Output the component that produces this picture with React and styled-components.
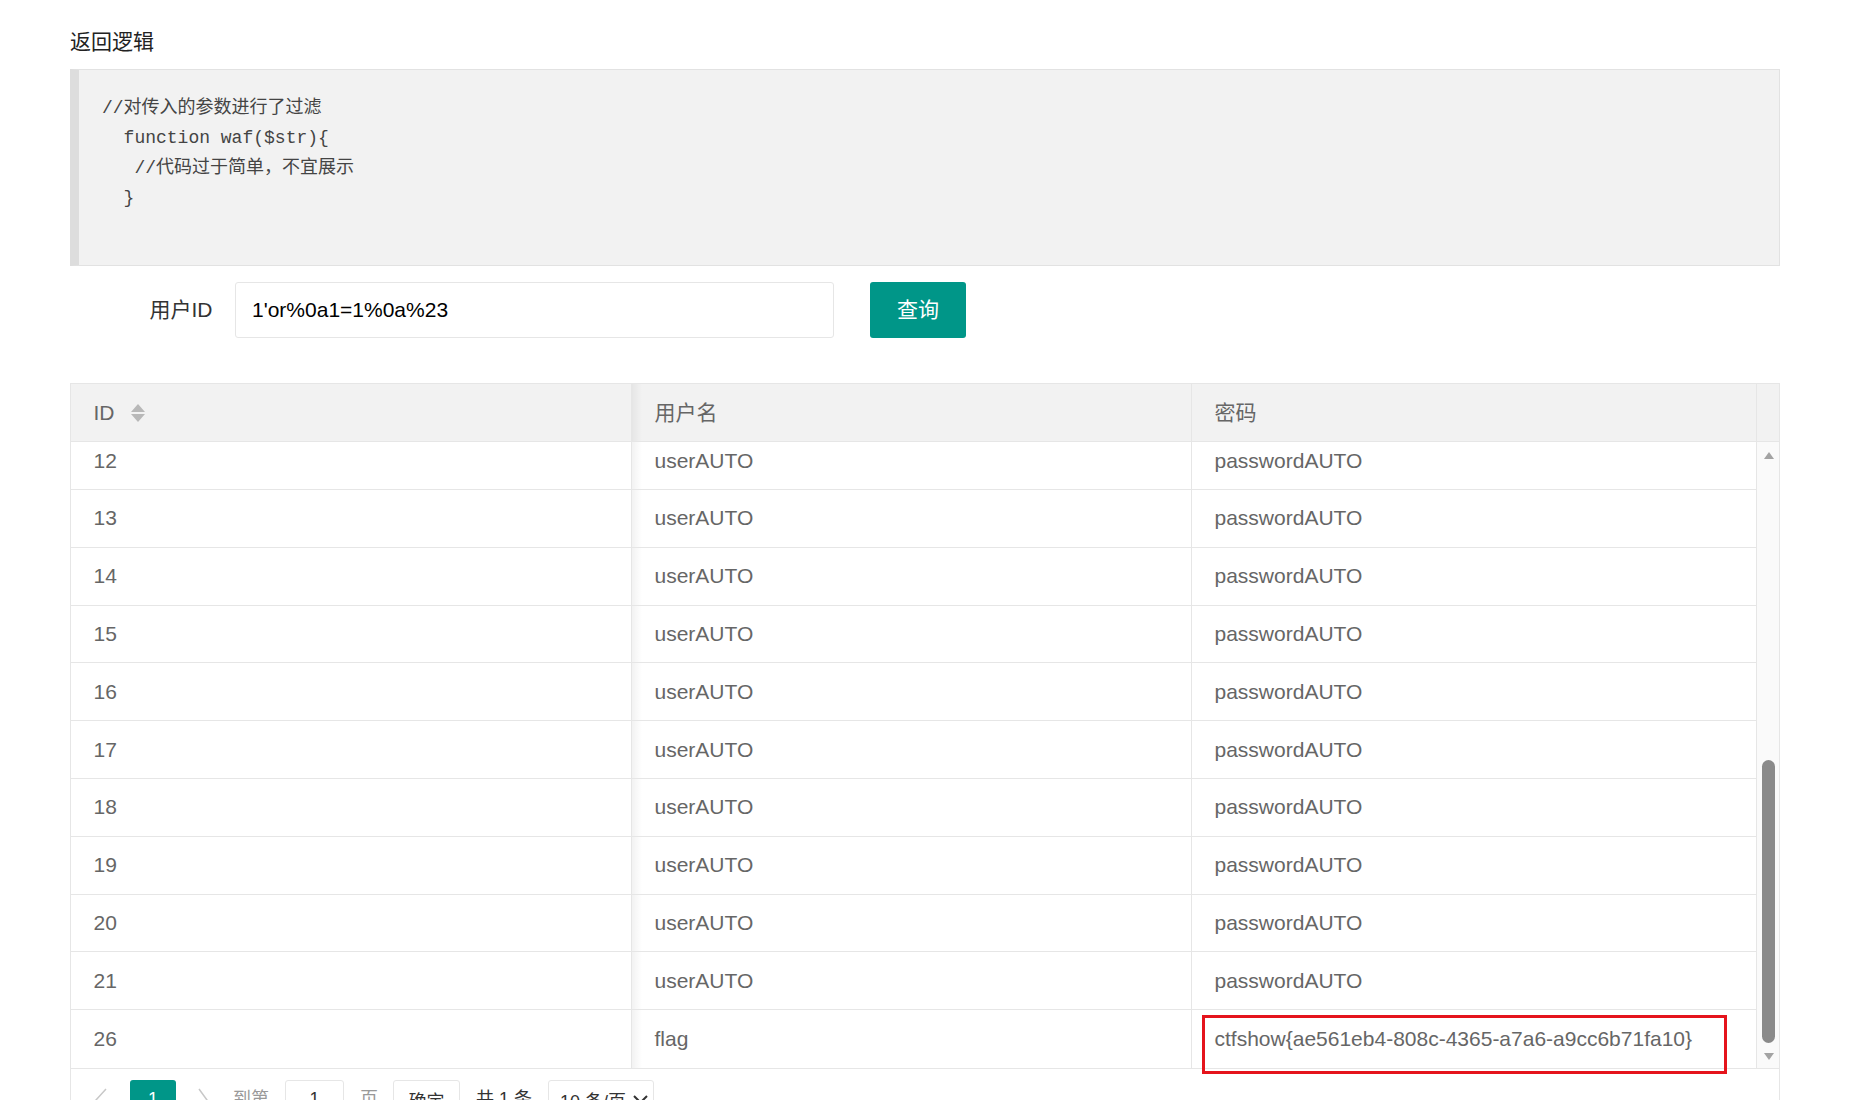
import React from "react";
import styled, { createGlobalStyle } from "styled-components";

const GlobalStyle = createGlobalStyle`
  html, body {
    margin: 0;
    padding: 0;
    background: #fff;
    overflow: hidden;
  }
  body {
    font-family: "Liberation Sans", "Noto Sans CJK SC", sans-serif;
    color: #333;
  }
  * {
    box-sizing: border-box;
  }
`;

// the list is scrolled to its end: rows 12..26 are the ones in view
const rows = [
  ...Array.from({ length: 10 }, (_, i) => ({
    id: i + 12,
    username: "userAUTO",
    password: "passwordAUTO",
  })),
  {
    id: 26,
    username: "flag",
    password: "ctfshow{ae561eb4-808c-4365-a7a6-a9cc6b71fa10}",
  },
];

const code = `//对传入的参数进行了过滤
  function waf($str){
   //代码过于简单，不宜展示
  }`;

function App() {
  return (
    <Page>
      <GlobalStyle />
      <Title>返回逻辑</Title>
      <CodeBlock>{code}</CodeBlock>

      <FormRow>
        <Label>用户ID</Label>
        <Input readOnly value="1'or%0a1=1%0a%23" />
        <Button>查询</Button>
      </FormRow>

      <Table>
        <HeadRow>
          <HeadCell>
            ID
            <SortIcon>
              <Tri $up />
              <Tri />
            </SortIcon>
          </HeadCell>
          <HeadCell $divider $shadow>用户名</HeadCell>
          <HeadCell $divider>密码</HeadCell>
          <HeadCell $divider />
        </HeadRow>

        <Body>
          <RowsArea>
            {rows.map((r, i) => (
              <Row key={r.id} $last={i === rows.length - 1}>
                <Cell>{r.id}</Cell>
                <Cell $divider $shadow>{r.username}</Cell>
                <Cell $divider>{r.password}</Cell>
              </Row>
            ))}
          </RowsArea>
          <Gutter>
            <Arrow $up />
            <Track>
              <Thumb />
            </Track>
            <Arrow />
          </Gutter>
        </Body>

        <Pager>
          <Chevron width="12" height="24" viewBox="0 0 12 24" $mr={23}>
            <polyline points="11,1 1,12 11,23" />
          </Chevron>
          <CurrPage>1</CurrPage>
          <Chevron width="10" height="24" viewBox="0 0 10 24" $mr={25}>
            <polyline points="1,1 9,12 1,23" />
          </Chevron>
          <PagerText $muted $mr={16}>到第</PagerText>
          <PagerBox $w={59} $mr={16}>1</PagerBox>
          <PagerText $muted $mr={15}>页</PagerText>
          <PagerBox $w={67} $mr={16}>确定</PagerBox>
          <PagerText $mr={16}>共 1 条</PagerText>
          <PagerSelect>
            10 条/页
            <svg width="15" height="9" viewBox="0 0 15 9">
              <polyline points="1,1 7.5,7.5 14,1" fill="none" stroke="#333" strokeWidth="2" />
            </svg>
          </PagerSelect>
        </Pager>

        <Highlight />
      </Table>
    </Page>
  );
}

export default App;

const Page = styled.div`
  padding: 27px 71px 0 70px;
`;

const Title = styled.div`
  font-size: 21px;
  line-height: 30px;
  color: #222;
  margin-bottom: 12px;
`;

const CodeBlock = styled.pre`
  margin: 0;
  height: 197px;
  padding: 23px 20px 0 23px;
  background: #f2f2f2;
  border: 1px solid #e2e2e2;
  border-left: 9px solid #dddddd;
  font-family: "Liberation Mono", "Noto Sans CJK SC", monospace;
  font-size: 18px;
  line-height: 30px;
  color: #444;
  white-space: pre;
`;

const FormRow = styled.div`
  display: flex;
  align-items: center;
  height: 56px;
  margin-top: 16px;
`;

const Label = styled.label`
  width: 165px;
  padding-right: 22.5px;
  text-align: right;
  font-size: 21px;
  line-height: 30px;
  color: #333;
`;

const Input = styled.input`
  width: 599px;
  height: 56px;
  padding: 0 16px;
  border: 1px solid #e6e6e6;
  border-radius: 3px;
  font-family: inherit;
  font-size: 21px;
  color: #000;
  outline: none;
`;

const Button = styled.button`
  margin-left: 36px;
  width: 96px;
  height: 56px;
  padding: 0;
  border: none;
  border-radius: 3px;
  background: #009688;
  color: #fff;
  font-family: inherit;
  font-size: 21px;
  line-height: 30px;
`;

const Table = styled.div`
  position: relative;
  margin-top: 45px;
  border: 1px solid #e6e6e6;
`;

const HeadRow = styled.div`
  display: grid;
  grid-template-columns: 560px 560px 1fr 23px;
  height: 58px;
  background: #f2f2f2;
  border-bottom: 1px solid #e6e6e6;
`;

const HeadCell = styled.div`
  display: flex;
  align-items: center;
  padding: 0 22.5px;
  font-size: 21px;
  line-height: 30px;
  color: #666;
  border-left: ${(p) => (p.$divider ? "1px solid #e6e6e6" : "none")};
  background: ${(p) =>
    p.$shadow
      ? "linear-gradient(to right, rgba(0,0,0,0.05), rgba(0,0,0,0) 10px)"
      : "none"};
`;

const SortIcon = styled.span`
  display: inline-flex;
  flex-direction: column;
  gap: 2px;
  margin-left: 16px;
`;

const Tri = styled.span`
  width: 0;
  height: 0;
  border-left: 7px solid transparent;
  border-right: 7px solid transparent;
  ${(p) =>
    p.$up
      ? "border-bottom: 8px solid #b8b8b8;"
      : "border-top: 8px solid #b8b8b8;"}
`;

const Body = styled.div`
  display: flex;
  height: 626px;
`;

const RowsArea = styled.div`
  flex: 1;
  display: flex;
  flex-direction: column;
  justify-content: flex-end;
  overflow: hidden;
`;

const Row = styled.div`
  flex-shrink: 0;
  display: grid;
  grid-template-columns: 560px 560px 1fr;
  height: 57.8px;
  border-bottom: ${(p) => (p.$last ? "none" : "1px solid #e6e6e6")};
`;

const Cell = styled.div`
  display: flex;
  align-items: center;
  padding: 0 22.5px;
  font-size: 21px;
  line-height: 30px;
  color: #666;
  border-left: ${(p) => (p.$divider ? "1px solid #e6e6e6" : "none")};
  background: ${(p) =>
    p.$shadow
      ? "linear-gradient(to right, rgba(0,0,0,0.05), rgba(0,0,0,0) 10px)"
      : "none"};
`;

const Gutter = styled.div`
  width: 23px;
  display: flex;
  flex-direction: column;
  align-items: center;
  padding: 10px 0 8px 1px;
  background: #fafafa;
  border-left: 1px solid #e6e6e6;
`;

const Arrow = styled.span`
  width: 0;
  height: 0;
  border-left: 5.5px solid transparent;
  border-right: 5.5px solid transparent;
  ${(p) =>
    p.$up
      ? "border-bottom: 7px solid #a3a3a3;"
      : "border-top: 7px solid #a3a3a3;"}
`;

const Track = styled.div`
  flex: 1;
  display: flex;
  flex-direction: column;
  justify-content: flex-end;
`;

const Thumb = styled.div`
  width: 13px;
  height: 283px;
  margin-bottom: 10px;
  border-radius: 7px;
  background: #8a8a8a;
`;

const Pager = styled.div`
  display: flex;
  align-items: flex-start;
  height: 62px;
  padding: 11px 0 0 24px;
  border-top: 1px solid #e6e6e6;
  font-size: 18px;
`;

const Chevron = styled.svg`
  margin-top: 8px;
  margin-right: ${(p) => p.$mr}px;
  fill: none;
  stroke: #c8c8c8;
  stroke-width: 1.5;
`;

const CurrPage = styled.span`
  width: 46px;
  height: 39px;
  margin-right: 22px;
  display: flex;
  align-items: center;
  justify-content: center;
  background: #009688;
  border-radius: 3px;
  color: #fff;
`;

const PagerText = styled.span`
  height: 39px;
  line-height: 39px;
  margin-right: ${(p) => p.$mr}px;
  color: ${(p) => (p.$muted ? "#999" : "#333")};
`;

const PagerBox = styled.span`
  width: ${(p) => p.$w}px;
  height: 39px;
  margin-right: ${(p) => p.$mr}px;
  display: flex;
  align-items: center;
  justify-content: center;
  border: 1px solid #e6e6e6;
  border-radius: 3px;
  color: #333;
`;

const PagerSelect = styled.span`
  width: 106px;
  height: 39px;
  display: flex;
  align-items: center;
  justify-content: space-between;
  padding: 0 5px 0 11px;
  border: 1px solid #e6e6e6;
  border-radius: 3px;
  color: #333;
`;

const Highlight = styled.div`
  position: absolute;
  left: 1131px;
  top: 631px;
  width: 525px;
  height: 58.5px;
  border: 3px solid #e5141c;
  pointer-events: none;
`;
